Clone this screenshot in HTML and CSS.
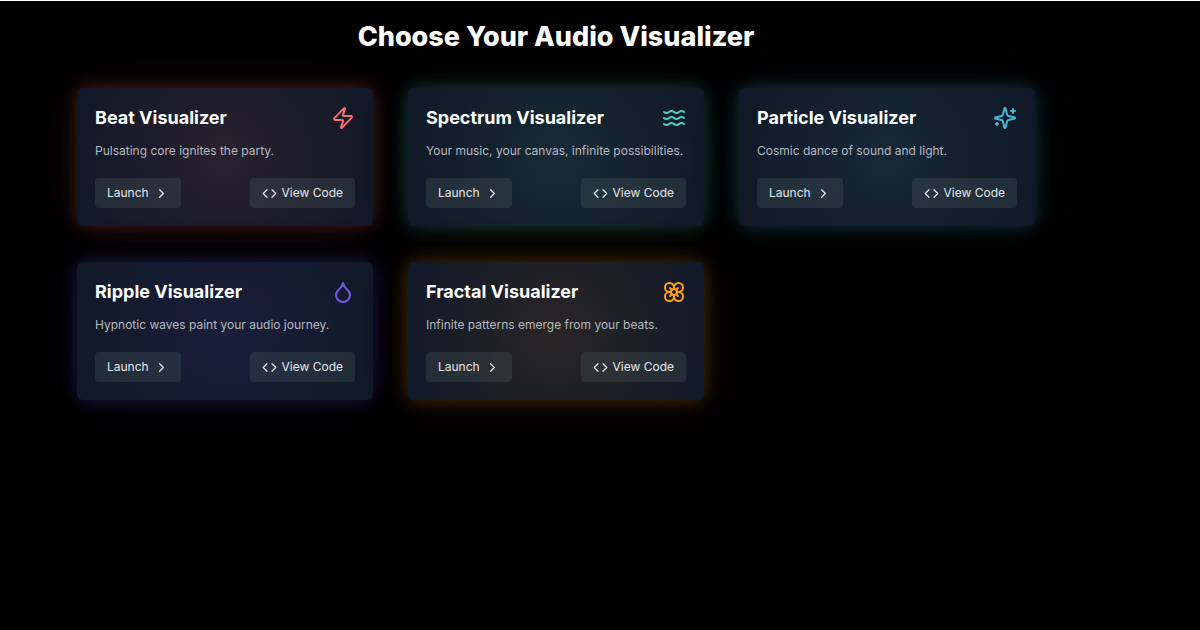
FILE: index.html
```html
<!DOCTYPE html>
<html lang="en">
<head>
<meta charset="utf-8">
<meta name="viewport" content="width=device-width, initial-scale=1">
<title>Audio Visualizer</title>
<link rel="stylesheet" href="styles.css">
</head>
<body>
<svg class="sprite" aria-hidden="true">
  <symbol id="chevron" viewBox="0 0 24 24"><path d="m9 18 6-6-6-6"/></symbol>
  <symbol id="code" viewBox="0 0 24 24"><path d="m16 18 6-6-6-6M8 6l-6 6 6 6"/></symbol>
</svg>
<main class="page">
  <h1 class="page-title">Choose Your Audio Visualizer</h1>
  <div class="grid">
    <article class="card beat">
      <header class="card-head">
        <h2 class="card-title">Beat Visualizer</h2>
        <svg class="card-icon" viewBox="0 0 24 24" aria-hidden="true"><path d="M4 14a1 1 0 0 1-.78-1.63l9.9-10.2a.5.5 0 0 1 .86.46l-1.92 6.02A1 1 0 0 0 13 10h7a1 1 0 0 1 .78 1.63l-9.9 10.2a.5.5 0 0 1-.86-.46l1.92-6.02A1 1 0 0 0 11 14z"/></svg>
      </header>
      <p class="card-text">Pulsating core ignites the party.</p>
      <div class="actions">
        <button class="btn" type="button">Launch <svg class="btn-icon" aria-hidden="true"><use href="#chevron"/></svg></button>
        <button class="btn" type="button"><svg class="btn-icon" aria-hidden="true"><use href="#code"/></svg> View Code</button>
      </div>
    </article>
    <article class="card spectrum">
      <header class="card-head">
        <h2 class="card-title">Spectrum Visualizer</h2>
        <svg class="card-icon" viewBox="0 0 24 24" aria-hidden="true"><path d="M2 6c.6.5 1.2 1 2.5 1C7 7 7 5 9.5 5c2.6 0 2.4 2 5 2 2.5 0 2.5-2 5-2 1.3 0 1.9.5 2.5 1"/><path d="M2 12c.6.5 1.2 1 2.5 1 2.5 0 2.5-2 5-2 2.6 0 2.4 2 5 2 2.5 0 2.5-2 5-2 1.3 0 1.9.5 2.5 1"/><path d="M2 18c.6.5 1.2 1 2.5 1 2.5 0 2.5-2 5-2 2.6 0 2.4 2 5 2 2.5 0 2.5-2 5-2 1.3 0 1.9.5 2.5 1"/></svg>
      </header>
      <p class="card-text">Your music, your canvas, infinite possibilities.</p>
      <div class="actions">
        <button class="btn" type="button">Launch <svg class="btn-icon" aria-hidden="true"><use href="#chevron"/></svg></button>
        <button class="btn" type="button"><svg class="btn-icon" aria-hidden="true"><use href="#code"/></svg> View Code</button>
      </div>
    </article>
    <article class="card particle">
      <header class="card-head">
        <h2 class="card-title">Particle Visualizer</h2>
        <svg class="card-icon" viewBox="0 0 24 24" aria-hidden="true"><path d="M9.937 15.5A2 2 0 0 0 8.5 14.063l-6.135-1.582a.5.5 0 0 1 0-.962L8.5 9.936A2 2 0 0 0 9.937 8.5l1.582-6.135a.5.5 0 0 1 .963 0L14.063 8.5A2 2 0 0 0 15.5 9.937l6.135 1.581a.5.5 0 0 1 0 .964L15.5 14.063a2 2 0 0 0-1.437 1.437l-1.582 6.135a.5.5 0 0 1-.963 0z"/><path d="M20 3v4M22 5h-4M4 17v2M5 18H3"/></svg>
      </header>
      <p class="card-text">Cosmic dance of sound and light.</p>
      <div class="actions">
        <button class="btn" type="button">Launch <svg class="btn-icon" aria-hidden="true"><use href="#chevron"/></svg></button>
        <button class="btn" type="button"><svg class="btn-icon" aria-hidden="true"><use href="#code"/></svg> View Code</button>
      </div>
    </article>
    <article class="card ripple">
      <header class="card-head">
        <h2 class="card-title">Ripple Visualizer</h2>
        <svg class="card-icon" viewBox="0 0 24 24" aria-hidden="true"><path d="M12 22a7 7 0 0 0 7-7c0-2-1-3.9-3-5.5s-3.5-4-4-6.5c-.5 2.5-2 4.9-4 6.5C6 11.1 5 13 5 15a7 7 0 0 0 7 7z"/></svg>
      </header>
      <p class="card-text">Hypnotic waves paint your audio journey.</p>
      <div class="actions">
        <button class="btn" type="button">Launch <svg class="btn-icon" aria-hidden="true"><use href="#chevron"/></svg></button>
        <button class="btn" type="button"><svg class="btn-icon" aria-hidden="true"><use href="#code"/></svg> View Code</button>
      </div>
    </article>
    <article class="card fractal">
      <header class="card-head">
        <h2 class="card-title">Fractal Visualizer</h2>
        <svg class="card-icon" viewBox="0 0 24 24" aria-hidden="true"><circle cx="12" cy="12" r="3"/><path d="M12 16.5A4.5 4.5 0 1 1 7.5 12 4.5 4.5 0 1 1 12 7.5a4.5 4.5 0 1 1 4.5 4.5 4.5 4.5 0 1 1-4.5 4.5"/><path d="M12 7.5V9M7.5 12H9M16.5 12H15M12 16.5V15M8 8l1.88 1.88M14.12 9.88 16 8M8 16l1.88-1.88M14.12 14.12 16 16"/></svg>
      </header>
      <p class="card-text">Infinite patterns emerge from your beats.</p>
      <div class="actions">
        <button class="btn" type="button">Launch <svg class="btn-icon" aria-hidden="true"><use href="#chevron"/></svg></button>
        <button class="btn" type="button"><svg class="btn-icon" aria-hidden="true"><use href="#code"/></svg> View Code</button>
      </div>
    </article>
  </div>
</main>
</body>
</html>
```

FILE: styles.css
```css
* { box-sizing: border-box; }

body {
  margin: 0;
  min-height: 100vh;
  border-top: 1px solid #fff;
  background: #000;
  color: #fff;
  font-family: Inter, "Liberation Sans", sans-serif;
}

.sprite {
  position: absolute;
  width: 0;
  height: 0;
}

.page { padding: 18px 165px 48px 77px; }

.page-title {
  margin: 0 0 33px;
  font-size: 27px;
  line-height: 36px;
  font-weight: 800;
  text-align: center;
}

.grid {
  display: grid;
  grid-template-columns: repeat(3, minmax(0, 1fr));
  gap: 36px 35px;
}

.card {
  --c: 255 107 107;
  padding: 18px;
  border-radius: 6px;
  background: radial-gradient(circle at center, rgb(var(--c) / 0.1), transparent 95%), #111827;
  box-shadow: 0 0 18px rgb(var(--c) / 0.25), 0 0 54px rgb(var(--c) / 0.08);
}

.spectrum { --c: 78 205 196; }
.particle { --c: 69 183 209; }
.ripple { --c: 108 92 231; }
.fractal { --c: 255 159 28; }

.card-head {
  display: flex;
  align-items: center;
  justify-content: space-between;
}

.card-title {
  margin: 0;
  font-size: 18px;
  line-height: 24px;
  font-weight: 700;
}

.card-icon {
  width: 24px;
  height: 24px;
  fill: none;
  stroke: rgb(var(--c));
  stroke-width: 2;
  stroke-linecap: round;
  stroke-linejoin: round;
}

.card-text {
  margin: 12px 0 18px;
  color: #b4b8c0;
  font-size: 12px;
  line-height: 18px;
}

.actions {
  display: flex;
  justify-content: space-between;
}

.btn {
  display: flex;
  align-items: center;
  gap: 5px;
  height: 30px;
  padding: 0 12px;
  border: 0;
  border-radius: 4px;
  background: rgb(85 105 105 / 0.25);
  color: #e5e7eb;
  font: inherit;
  font-size: 12px;
  line-height: 18px;
}

.btn-icon {
  width: 15px;
  height: 15px;
  fill: none;
  stroke: currentColor;
  stroke-width: 2;
  stroke-linecap: round;
  stroke-linejoin: round;
}

@media (max-width: 1000px) {
  .page { padding: 18px 36px 48px; }
  .grid { grid-template-columns: repeat(auto-fit, minmax(260px, 1fr)); }
}
```
